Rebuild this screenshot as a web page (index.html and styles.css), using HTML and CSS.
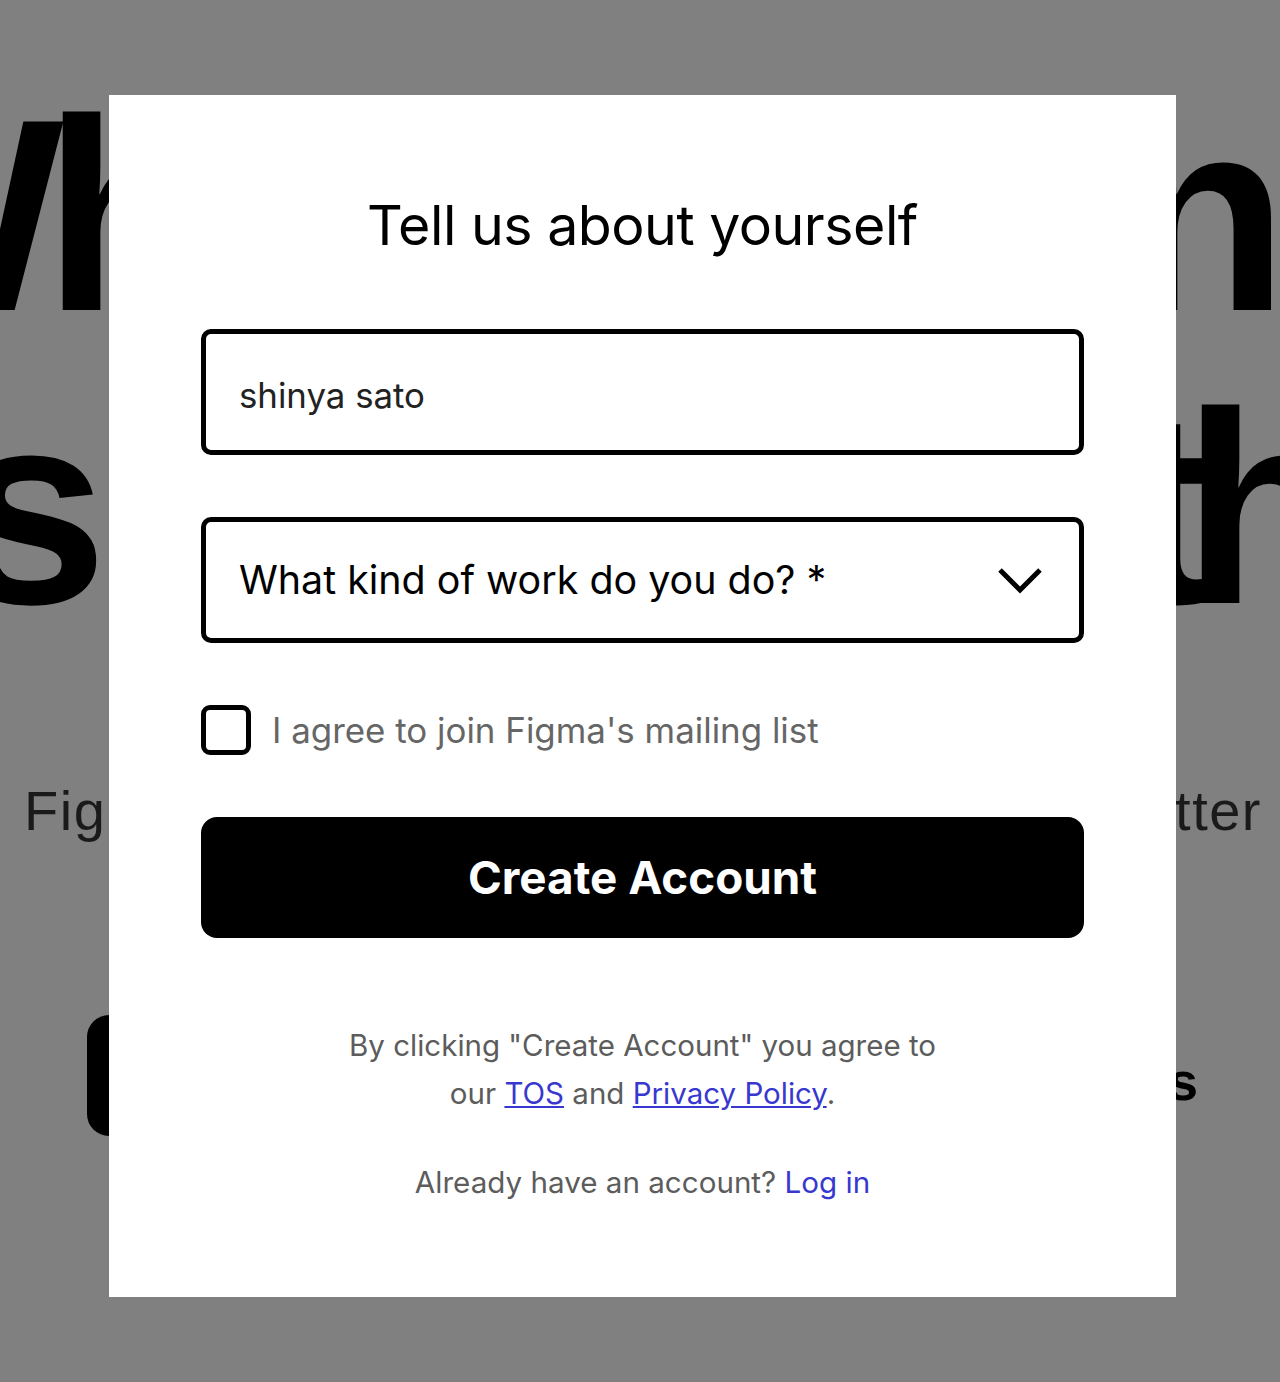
FILE: index.html
```html
<!DOCTYPE html>
<html lang="en">
<head>
<meta charset="utf-8">
<title>Tell us about yourself</title>
<link rel="stylesheet" href="styles.css">
</head>
<body>
<div class="page">
  <div class="hero-row hero-row-1">
    <span class="hero-left">Wh</span>
    <span class="hero-right">n</span>
  </div>
  <div class="hero-row hero-row-2">
    <span class="hero-left s-left">s</span>
    <span class="hero-right th">th</span>
  </div>
  <div class="sub-row">
    <span>Fig</span>
    <span>tter</span>
  </div>
  <div class="cta-row">
    <span class="cta-btn"></span>
    <span class="cta-text">s</span>
  </div>
</div>

<div class="overlay">
  <div class="modal">
    <h1 class="title">Tell us about yourself</h1>
    <div class="field">
      <span class="field-value">shinya sato</span>
    </div>
    <div class="field select">
      <span class="select-label">What kind of work do you do? *</span>
      <svg class="chevron" width="46" height="28" viewBox="0 0 46 28">
        <path d="M3 4 L23 24 L43 4" fill="none" stroke="#000" stroke-width="5"/>
      </svg>
    </div>
    <label class="check-row">
      <span class="checkbox"></span>
      <span class="check-label">I agree to join Figma's mailing list</span>
    </label>
    <button class="create-btn">Create Account</button>
    <p class="legal">By clicking "Create Account" you agree to<br>our <a href="#">TOS</a> and <a href="#">Privacy Policy</a>.</p>
    <p class="login">Already have an account? <a href="#" class="login-link">Log in</a></p>
  </div>
</div>
</body>
</html>
```

FILE: styles.css
```css
html, body {
  margin: 0;
  padding: 0;
}
body {
  width: 1280px;
  height: 1382px;
  overflow: hidden;
  background: #808080;
  font-family: "Liberation Sans", Arial, sans-serif;
}

/* background page (dimmed) */
.page {
  padding-top: 69px;
  color: #000;
}
.hero-row {
  display: flex;
  justify-content: space-between;
  font-size: 274px;
  font-weight: 700;
  line-height: 293px;
  white-space: nowrap;
  overflow: hidden;
}
.hero-row-1 .hero-left { margin-left: -195px; letter-spacing: -20px; }
.hero-row-1 .hero-right { margin-right: -8px; }
.hero-row-2 .s-left { margin-left: -45px; }
.hero-row-2 .th { margin-right: -40px; letter-spacing: -30px; }

.sub-row {
  display: flex;
  justify-content: space-between;
  margin-top: 123px;
  padding: 0 18px 0 24px;
  font-size: 56px;
  letter-spacing: 1.5px;
  line-height: 66px;
  color: #1a1a1a;
}
.cta-row {
  display: flex;
  justify-content: space-between;
  align-items: center;
  margin-top: 171px;
  padding: 0 82px 0 87px;
}
.cta-btn {
  display: block;
  width: 300px;
  height: 121px;
  background: #000;
  border-radius: 22px;
}
.cta-text {
  font-size: 54px;
  font-weight: 700;
  line-height: 64px;
  margin-top: 10px;
}

/* modal */
.overlay {
  position: fixed;
  inset: 0;
  display: flex;
  justify-content: center;
  align-items: flex-start;
  padding-top: 95px;
}
.modal {
  box-sizing: border-box;
  width: 1067px;
  height: 1202px;
  margin-left: 5px;
  background: #fff;
  padding: 103px 92px 0;
  font-family: Inter, "Liberation Sans", sans-serif;
  display: flex;
  flex-direction: column;
}
.title {
  margin: 0;
  text-align: center;
  font-size: 55.5px;
  line-height: 54px;
  font-weight: 400;
  color: #000;
  letter-spacing: -0.5px;
}
.field {
  box-sizing: border-box;
  height: 126px;
  border: 5px solid #000;
  border-radius: 10px;
  display: flex;
  align-items: center;
  padding: 0 33px;
  margin-top: 77px;
}
.field-value {
  font-size: 34.8px;
  color: #222;
  margin-top: 6px;
}
.select {
  margin-top: 62px;
  justify-content: space-between;
  padding-right: 36px;
}
.select-label {
  font-size: 39.4px;
  color: #000;
}
.chevron {
  display: block;
}
.check-row {
  display: flex;
  align-items: center;
  gap: 21px;
  margin-top: 62px;
  height: 50px;
}
.checkbox {
  box-sizing: border-box;
  width: 50px;
  height: 50px;
  border: 5px solid #000;
  border-radius: 9px;
}
.check-label {
  font-size: 34.9px;
  color: #666;
}
.create-btn {
  margin-top: 62px;
  height: 121px;
  border: 0;
  border-radius: 16px;
  background: #000;
  color: #fff;
  font-family: Inter, "Liberation Sans", sans-serif;
  font-size: 45.8px;
  font-weight: 700;
}
.legal {
  margin: 83px 0 0;
  text-align: center;
  font-size: 29.5px;
  line-height: 48px;
  color: #5c5c5c;
}
.legal a, .login-link {
  color: #3838d0;
}
.login {
  margin: 41px 0 0;
  text-align: center;
  font-size: 29.6px;
  line-height: 48px;
  color: #5c5c5c;
}
.login-link {
  text-decoration: none;
}
```
